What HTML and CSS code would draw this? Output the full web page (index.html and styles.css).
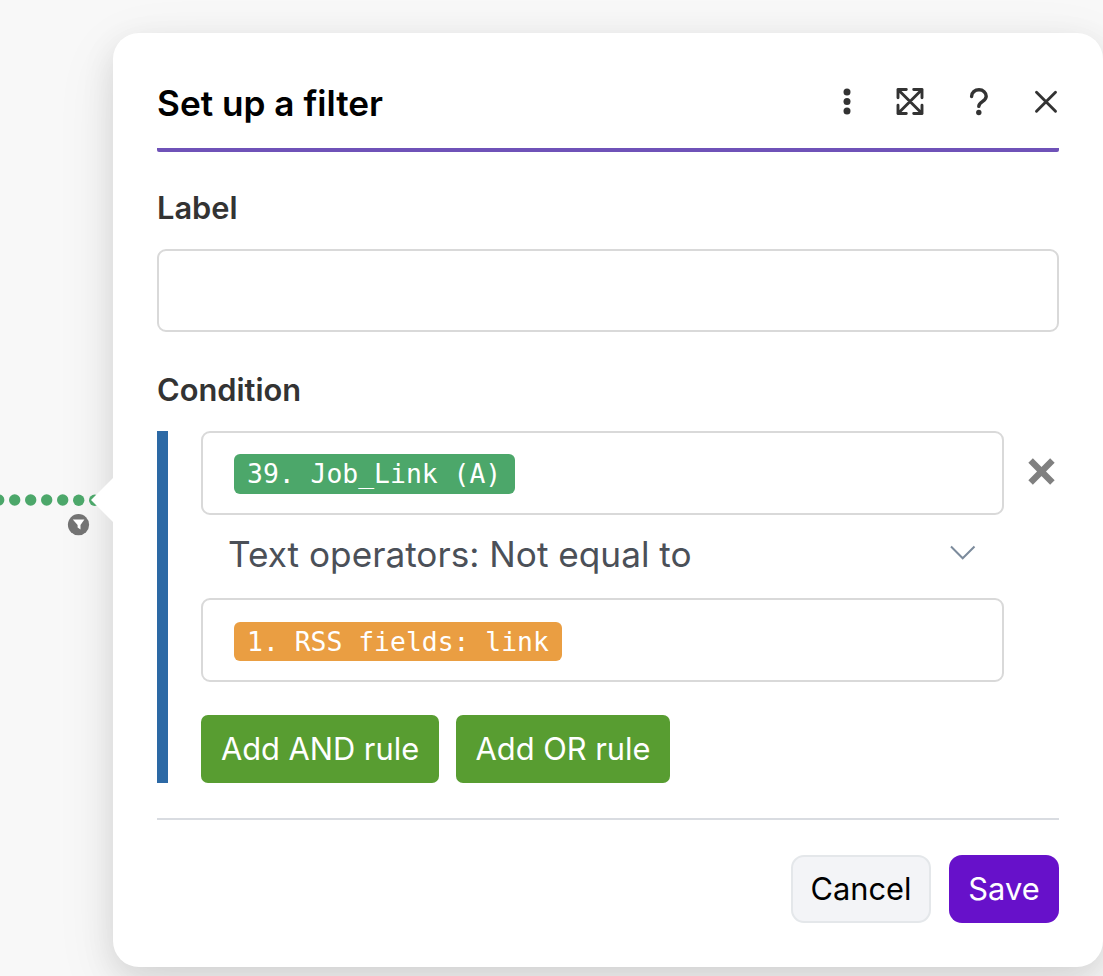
FILE: index.html
```html
<!DOCTYPE html>
<html lang="en">
<head>
<meta charset="utf-8">
<title>Set up a filter</title>
<link rel="stylesheet" href="styles.css">
</head>
<body>
<main class="canvas">
  <section class="panel">
    <header class="panel-header">
      <h1 class="title">Set up a filter</h1>
      <div class="tools">
        <svg class="tool" width="28" height="28" viewBox="0 0 28 28" fill="#333"><circle cx="14" cy="4" r="3.5"/><circle cx="14" cy="13.500" r="3.5"/><circle cx="14" cy="23.100" r="3.5"/></svg>
        <svg class="tool expand" width="28" height="28" viewBox="0 0 28 28" fill="none" stroke="#333" stroke-width="2.9" stroke-linecap="round" stroke-linejoin="round"><path d="M2 1.500 26 25.500M26 1.500 2 25.500M10.300 1.500H2V9.800M17.700 1.500H26V9.800M2 17.200V25.500H10.300M26 17.200V25.500H17.700"/></svg>
        <svg class="tool help" width="28" height="28" viewBox="0 0 28 28"><path d="M6.600 8.500C6.600 4.500 9.900 1.800 14 1.800s7.200 2.800 7.200 6.500c0 5.200-7.400 5.500-7.400 10.100" fill="none" stroke="#333" stroke-width="3.400" stroke-linecap="round"/><circle cx="13.800" cy="24.500" r="2.700" fill="#333"/></svg>
        <svg class="tool close" width="28" height="28" viewBox="0 0 28 28" fill="none" stroke="#333" stroke-width="2.900" stroke-linecap="round"><path d="M4.500 4.300 23.500 23.300M23.500 4.300 4.500 23.300"/></svg>
      </div>
    </header>
    <label class="field-label" for="filter-label">Label</label>
    <input class="field" id="filter-label" type="text">
    <h2 class="field-label condition-label">Condition</h2>
    <div class="condition">
      <div class="rule">
        <div class="operands">
          <div class="operand"><span class="pill pill-green">39. Job_Link (A)</span></div>
          <div class="operator">
            <span>Text operators: Not equal to</span>
            <svg width="26" height="16" viewBox="0 0 26 16" fill="none" stroke="#7c8b9c" stroke-width="2"><path d="M1 1.500 12.700 13.300 24.500 1.500"/></svg>
          </div>
          <div class="operand"><span class="pill pill-orange">1. RSS fields: link</span></div>
        </div>
        <svg class="remove" width="28" height="28" viewBox="0 0 28 28" stroke="#808080" stroke-width="6.400"><path d="M2.600 2.600 24.400 24.400M24.400 2.600 2.600 24.400"/></svg>
      </div>
      <div class="rule-actions">
        <button class="btn-rule" type="button">Add AND rule</button>
        <button class="btn-rule btn-or" type="button">Add OR rule</button>
      </div>
    </div>
    <footer class="panel-footer">
      <button class="btn btn-cancel" type="button">Cancel</button>
      <button class="btn btn-save" type="button">Save</button>
    </footer>
  </section>
  <svg class="connector" width="114" height="64" viewBox="0 0 114 64">
    <g fill="#4ca76a"><circle cx="-1.300" cy="24" r="5.700"/><circle cx="14.700" cy="24" r="5.700"/><circle cx="30.700" cy="24" r="5.700"/><circle cx="46.700" cy="24" r="5.700"/><circle cx="62.700" cy="24" r="5.700"/><circle cx="78.700" cy="24.300" r="5.700"/><circle cx="94.700" cy="24.300" r="5.700"/></g>
    <path d="M114 1V47L91 24Z" fill="#fff"/>
    <circle cx="78.500" cy="48.700" r="10.600" fill="#737373"/>
    <path d="M72.800 43.500H84.400L80.500 49V53.500L77.600 51.500V49Z" fill="#fff"/>
  </svg>
</main>
</body>
</html>
```
FILE: styles.css
```css
* { box-sizing: border-box; }

body {
  margin: 0;
  background: #f8f8f8;
  font-family: Inter, sans-serif;
  color: #333;
}

.canvas {
  position: relative;
  height: 976px;
  padding: 33px 0 0 113px;
  overflow: hidden;
}

.panel {
  width: 990px;
  height: 934px;
  padding: 44px;
  border-radius: 26px;
  background: #fff;
  box-shadow: 0 11px 33px rgba(0, 0, 0, 0.1), 0 18px 62px rgba(0, 0, 0, 0.08);
}

.panel-header {
  display: flex;
  justify-content: space-between;
  height: 75px;
  border-bottom: 4px solid #6f52b8;
  border-radius: 2px;
}

.title {
  margin: 4px 0 0;
  font-size: 35.2px;
  line-height: 44px;
  font-weight: 600;
  color: #000;
}

.tools { display: flex; padding: 11px 0 0; }
.tool { margin-right: 35px; }
.expand { margin-right: 41px; }
.help { margin-right: 39px; }
.close { margin-right: -1px; }

.field-label {
  display: block;
  margin: 34px 0 0;
  font-size: 30.8px;
  line-height: 44px;
  font-weight: 600;
}

.field {
  display: block;
  width: 100%;
  height: 83px;
  margin-top: 19px;
  border: 2px solid #d9d9d9;
  border-radius: 9px;
  background: #fff;
}

.condition-label { margin-top: 36px; }

.condition {
  height: 352px;
  margin-top: 19px;
  padding-left: 33px;
  border-left: 11px solid #2c69a5;
}

.rule { display: flex; }
.operands { width: 803px; }

.operand {
  display: flex;
  align-items: flex-start;
  height: 84px;
  padding: 21px 31px 0;
  border: 2px solid #d9d9d9;
  border-radius: 9px;
}

.pill {
  height: 40px;
  padding: 0 13px;
  border-radius: 6px;
  font-family: "DejaVu Sans Mono", monospace;
  font-size: 26.4px;
  line-height: 40px;
  color: #fff;
  white-space: pre;
}

.pill-green { width: 281px; background: #4ca76a; }
.pill-orange { height: 39px; margin-top: 1px; background: #ea9e42; }

.operator {
  display: flex;
  align-items: center;
  justify-content: space-between;
  height: 83px;
  padding: 0 28px 6px 27px;
  font-size: 35.2px;
  line-height: 44px;
  color: #4b5058;
}

.operator svg { margin-top: -2px; }
.remove { margin: 27px 0 0 24px; }
.rule-actions { display: flex; gap: 17px; margin-top: 33px; }

button {
  padding: 0 0 2px;
  border: 0;
  font-family: inherit;
  font-size: 30.8px;
}

.btn-rule {
  width: 238px;
  height: 68px;
  border-radius: 7px;
  background: #589d31;
  color: #fff;
}

.btn-or { width: 214px; }

.panel-footer {
  display: flex;
  justify-content: flex-end;
  gap: 18px;
  margin-top: 35px;
  padding-top: 35px;
  border-top: 2px solid #d9dce1;
}

.btn { height: 68px; border-radius: 13px; }

.btn-cancel {
  width: 140px;
  border: 2px solid #e4e7ea;
  background: #f3f4f7;
  color: #000;
}

.btn-save {
  width: 110px;
  background: #6711ca;
  color: #fff;
}

.connector {
  position: absolute;
  top: 476px;
  left: 0;
}
```
